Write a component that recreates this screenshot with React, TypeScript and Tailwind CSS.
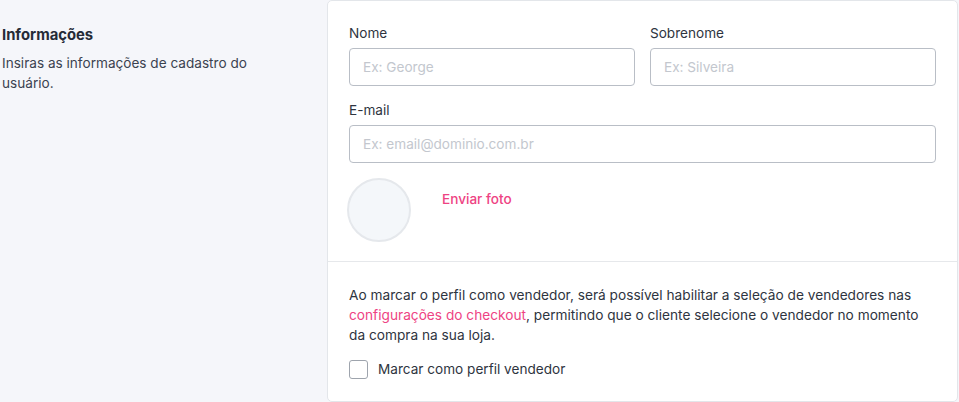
export default function App() {
  return (
    <div className="w-[959px] h-[402px] bg-[#f5f6fa] flex font-['Inter',sans-serif] text-[#2e3440] overflow-hidden">
      <div className="w-[327px] shrink-0 pl-[2px] pt-[25px]">
        <h2 className="text-[14.8px] leading-[20px] font-bold text-[#252b37]">Informações</h2>
        <p className="mt-[8px] w-[262px] text-[13.6px] leading-[20px] text-[#3b4250]">
          Insiras as informações de cadastro do usuário.
        </p>
      </div>
      <div className="w-[631px] h-[402px] bg-white border border-[#e3e6ea] rounded-[5px] flex flex-col">
        <div className="px-[21px] pt-[22px] pb-[19px] border-b border-[#e6e8eb]">
          <div className="grid grid-cols-2 gap-x-[15px]">
            <div className="flex flex-col">
              <label className="text-[13.6px] leading-[20px] text-[#2e3440]">Nome</label>
              <input
                placeholder="Ex: George"
                className="mt-[5px] h-[38px] rounded-[4px] border border-[#b9bec6] px-[13px] text-[13.6px] placeholder:text-[#c3c7ce] outline-none"
              />
            </div>
            <div className="flex flex-col">
              <label className="text-[13.6px] leading-[20px] text-[#2e3440]">Sobrenome</label>
              <input
                placeholder="Ex: Silveira"
                className="mt-[5px] h-[38px] rounded-[4px] border border-[#b9bec6] px-[13px] text-[13.6px] placeholder:text-[#c3c7ce] outline-none"
              />
            </div>
          </div>
          <div className="flex flex-col mt-[14px]">
            <label className="text-[13.6px] leading-[20px] text-[#2e3440]">E-mail</label>
            <input
              placeholder="Ex: email@dominio.com.br"
              className="mt-[5px] h-[38px] rounded-[4px] border border-[#b9bec6] px-[13px] text-[13.6px] placeholder:text-[#c3c7ce] outline-none"
            />
          </div>
          <div className="flex items-start mt-[15px] -ml-[2px]">
            <div className="w-[64px] h-[64px] rounded-full bg-[#f4f7fa] border-2 border-[#e5e8ec]" />
            <button className="ml-[31px] mt-[11px] text-[13.6px] leading-[20px] font-medium text-[#ee4383]">
              Enviar foto
            </button>
          </div>
        </div>
        <div className="px-[21px] pt-[23px]">
          <p className="w-[575px] text-[13.7px] leading-[20px] text-[#2e3440]">
            Ao marcar o perfil como vendedor, será possível habilitar a seleção de vendedores nas{' '}
            <a className="text-[#ee4383]">configurações do checkout</a>, permitindo que o cliente selecione o
            vendedor no momento da compra na sua loja.
          </p>
          <label className="mt-[14px] flex items-center gap-[10px]">
            <span className="w-[19px] h-[19px] rounded-[3px] border-[1.5px] border-[#9ea4ad] bg-white" />
            <span className="text-[13.6px] leading-[20px] text-[#2e3440]">Marcar como perfil vendedor</span>
          </label>
        </div>
      </div>
    </div>
  );
}
